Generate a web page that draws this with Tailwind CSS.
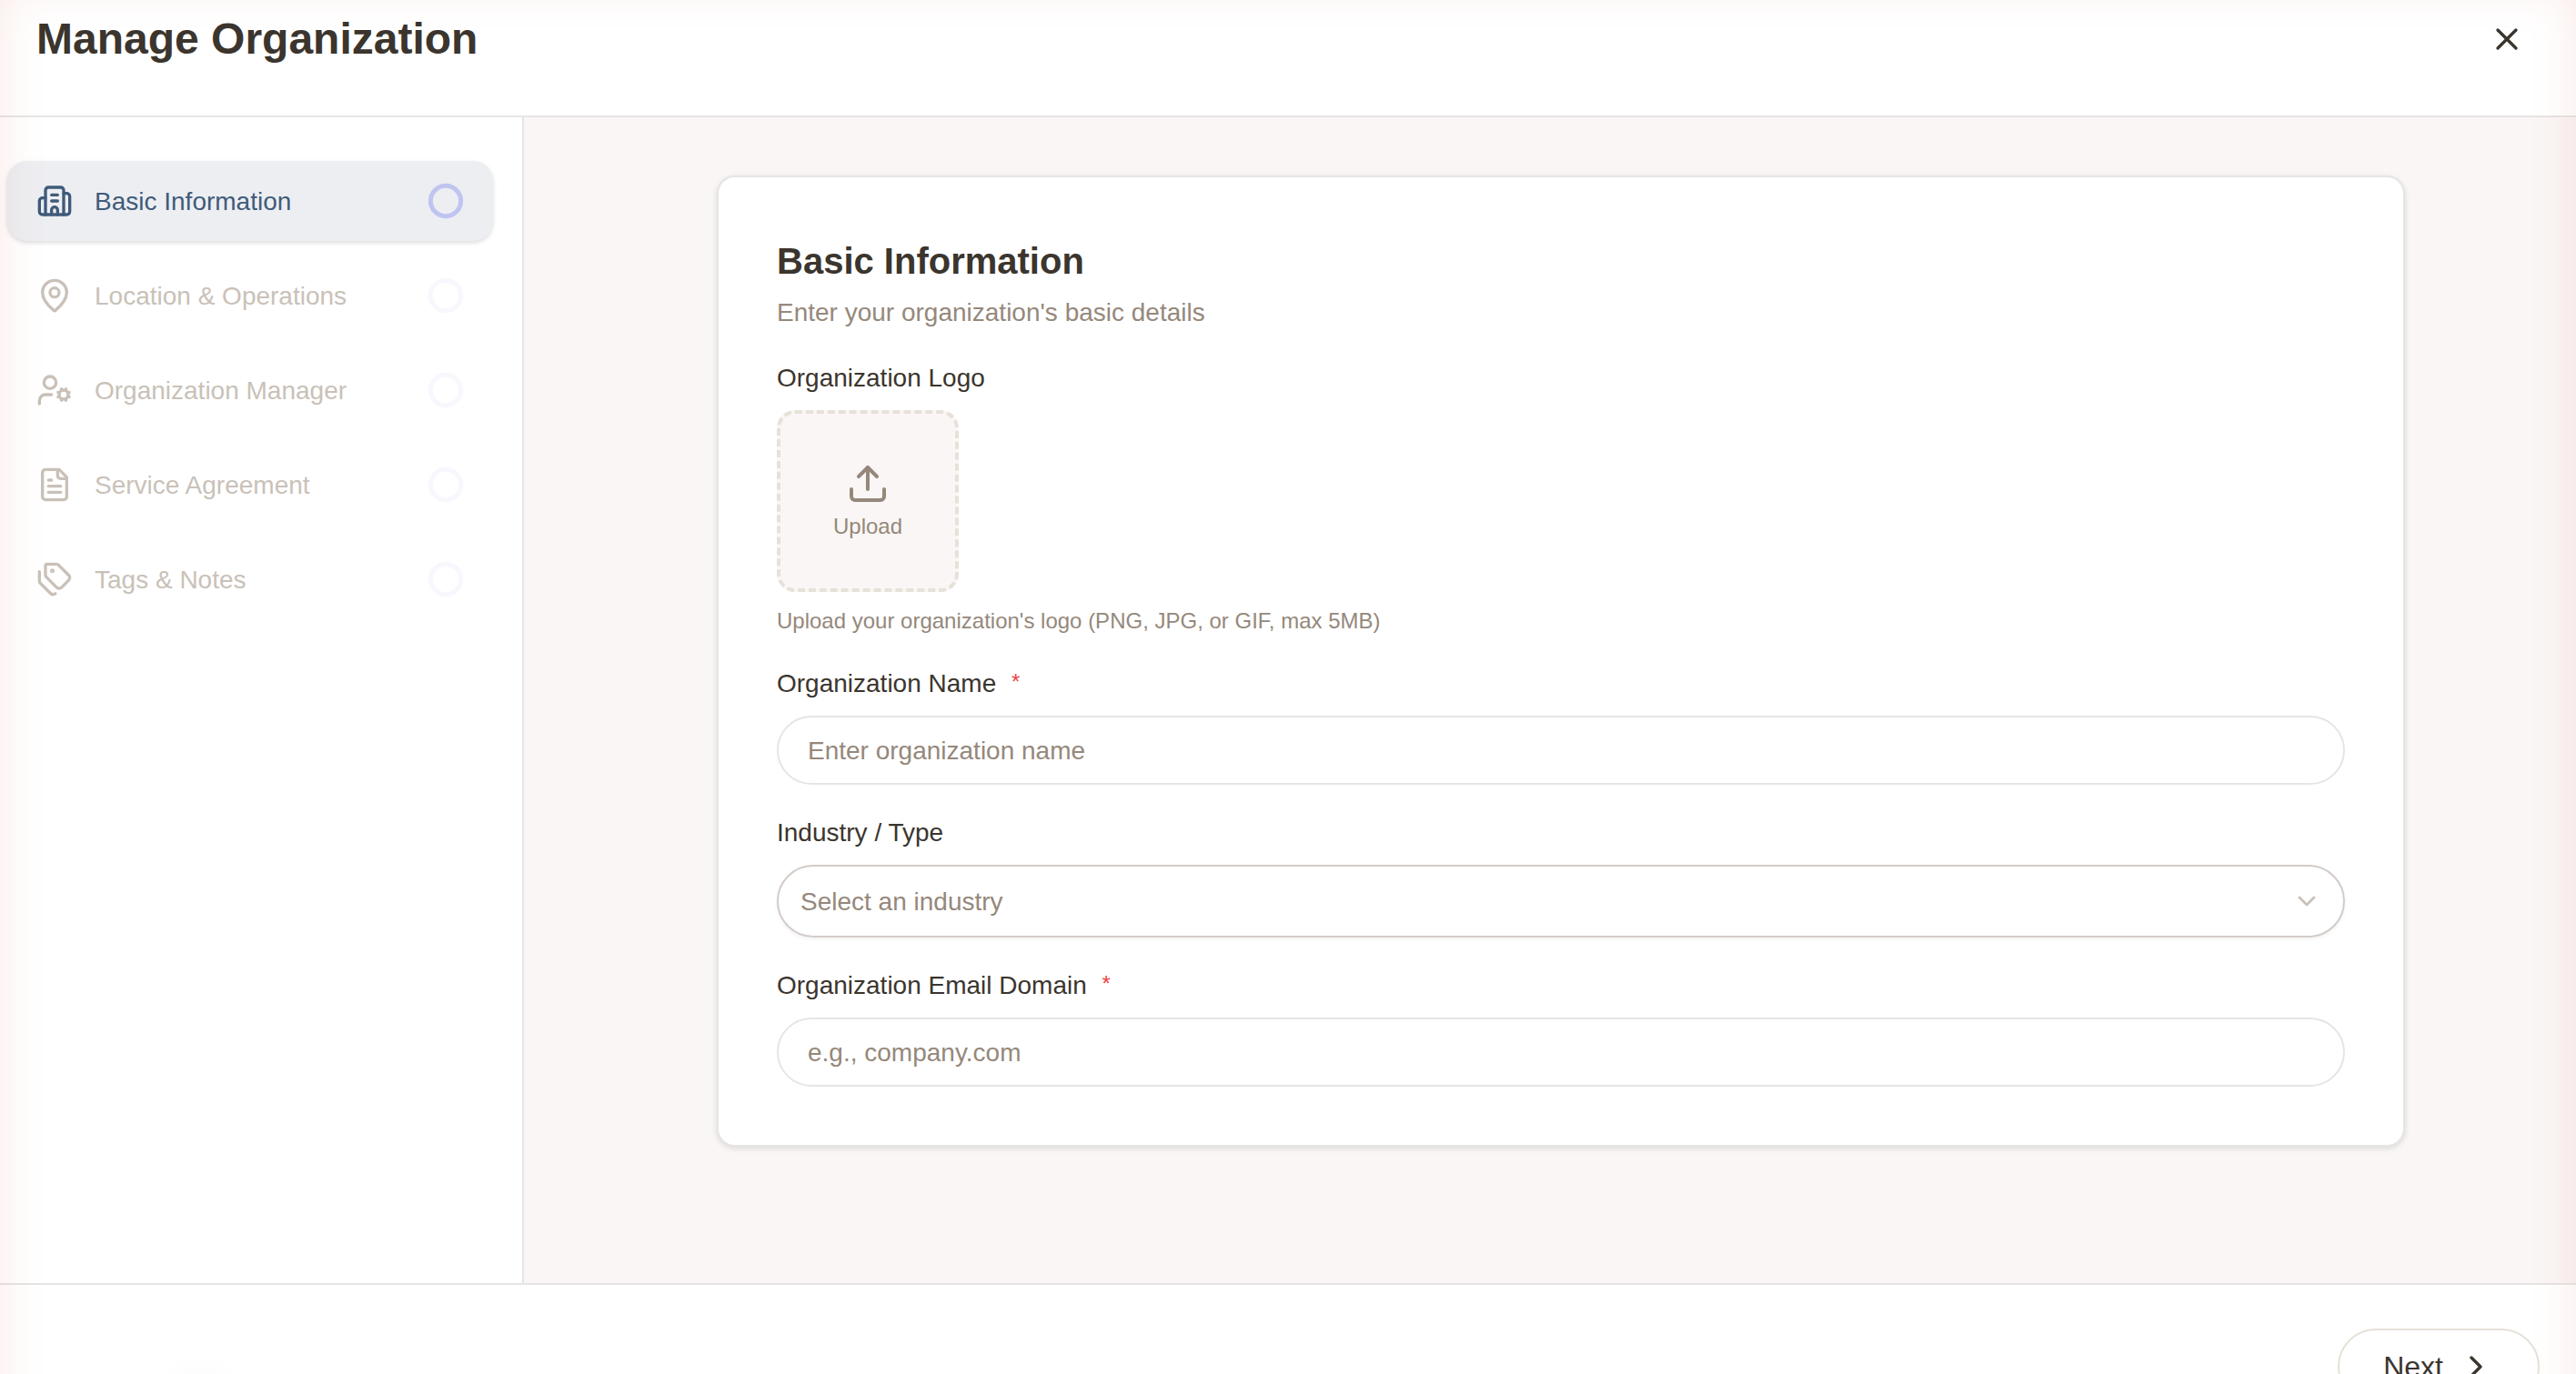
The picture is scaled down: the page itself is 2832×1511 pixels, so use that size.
<!DOCTYPE html>
<html lang="en">
<head>
    <meta charset="UTF-8">
    <meta name="viewport" content="width=device-width, initial-scale=1.0">
    <title>Manage Organization</title>
    <script src="https://cdn.jsdelivr.net/npm/@tailwindcss/browser@4"></script>
</head>
<body class="relative h-screen overflow-hidden bg-white text-[#3b352e] font-['Liberation_Sans',Arial,sans-serif]">
    <div class="flex flex-col h-full">
        <header class="flex justify-between items-start h-[129px] shrink-0 pl-10 pr-14 pt-[15px] border-b-2 border-[#e5e5e5]">
            <h1 class="text-[48px] leading-[56px] font-bold">Manage Organization</h1>
            <button class="mt-2" aria-label="Close">
                <svg class="size-10" viewBox="0 0 24 24" fill="none" stroke="currentColor" stroke-width="2" stroke-linecap="round" stroke-linejoin="round"><path d="M18 6 6 18"/><path d="m6 6 12 12"/></svg>
            </button>
        </header>

        <div class="flex h-[1282px] shrink-0">
            <!-- Steps -->
            <nav class="flex flex-col gap-4 w-[576px] shrink-0 pl-2 pr-8 pt-12 border-r-2 border-[#e5e5e5] text-[28px] leading-10 text-[#c9c1b8]">
                <a class="flex items-center gap-6 h-[88px] px-8 rounded-[22px] bg-[#edeef2] text-[#405b7a] shadow-[0_2px_5px_rgba(0,0,0,0.14)]">
                    <svg class="size-10" viewBox="0 0 24 24" fill="none" stroke="currentColor" stroke-width="2" stroke-linecap="round" stroke-linejoin="round"><path d="M10 12h4"/><path d="M10 8h4"/><path d="M14 21v-3a2 2 0 0 0-4 0v3"/><path d="M6 10H4a2 2 0 0 0-2 2v7a2 2 0 0 0 2 2h16a2 2 0 0 0 2-2V9a2 2 0 0 0-2-2h-2"/><path d="M6 21V5a2 2 0 0 1 2-2h8a2 2 0 0 1 2 2v16"/></svg>
                    <span class="flex-1 pt-0.5">Basic Information</span>
                    <svg class="size-10 text-[#c0c4f0]" viewBox="0 0 24 24" fill="none" stroke="currentColor" stroke-width="3"><circle cx="12" cy="12" r="10"/></svg>
                </a>
                <a class="flex items-center gap-6 h-[88px] px-8">
                    <svg class="size-10" viewBox="0 0 24 24" fill="none" stroke="currentColor" stroke-width="2" stroke-linecap="round" stroke-linejoin="round"><path d="M20 10c0 4.993-5.539 10.193-7.399 11.799a1 1 0 0 1-1.202 0C9.539 20.193 4 14.993 4 10a8 8 0 0 1 16 0"/><circle cx="12" cy="10" r="3"/></svg>
                    <span class="flex-1 pt-0.5">Location &amp; Operations</span>
                    <svg class="size-10 text-[#f7f7fe]" viewBox="0 0 24 24" fill="none" stroke="currentColor" stroke-width="3"><circle cx="12" cy="12" r="10"/></svg>
                </a>
                <a class="flex items-center gap-6 h-[88px] px-8">
                    <svg class="size-10" viewBox="0 0 24 24" fill="none" stroke="currentColor" stroke-width="2" stroke-linecap="round" stroke-linejoin="round"><path d="M10 15H6a4 4 0 0 0-4 4v2"/><path d="m14.305 16.53.923-.382"/><path d="m15.228 13.852-.923-.383"/><path d="m16.852 12.228-.383-.923"/><path d="m16.852 17.772-.383.924"/><path d="m19.148 12.228.383-.923"/><path d="m19.53 18.696-.382-.924"/><path d="m20.772 13.852.924-.383"/><path d="m20.772 16.148.924.383"/><circle cx="18" cy="15" r="3"/><circle cx="9" cy="7" r="4"/></svg>
                    <span class="flex-1 pt-0.5">Organization Manager</span>
                    <svg class="size-10 text-[#f7f7fe]" viewBox="0 0 24 24" fill="none" stroke="currentColor" stroke-width="3"><circle cx="12" cy="12" r="10"/></svg>
                </a>
                <a class="flex items-center gap-6 h-[88px] px-8">
                    <svg class="size-10" viewBox="0 0 24 24" fill="none" stroke="currentColor" stroke-width="2" stroke-linecap="round" stroke-linejoin="round"><path d="M15 2H6a2 2 0 0 0-2 2v16a2 2 0 0 0 2 2h12a2 2 0 0 0 2-2V7z"/><path d="M14 2v4a2 2 0 0 0 2 2h4"/><path d="M10 9H8"/><path d="M16 13H8"/><path d="M16 17H8"/></svg>
                    <span class="flex-1 pt-0.5">Service Agreement</span>
                    <svg class="size-10 text-[#f7f7fe]" viewBox="0 0 24 24" fill="none" stroke="currentColor" stroke-width="3"><circle cx="12" cy="12" r="10"/></svg>
                </a>
                <a class="flex items-center gap-6 h-[88px] px-8">
                    <svg class="size-10" viewBox="0 0 24 24" fill="none" stroke="currentColor" stroke-width="2" stroke-linecap="round" stroke-linejoin="round"><path d="M13.172 2a2 2 0 0 1 1.414.586l6.710 6.710a2.400 2.400 0 0 1 0 3.408l-4.592 4.592a2.400 2.400 0 0 1-3.408 0l-6.710-6.710A2 2 0 0 1 6 9.172V3a1 1 0 0 1 1-1z"/><path d="M2 7v6.172a2 2 0 0 0 .586 1.414l6.710 6.710a2.400 2.400 0 0 0 3.191.193"/><circle cx="10.500" cy="6.500" r=".5" fill="currentColor"/></svg>
                    <span class="flex-1 pt-0.5">Tags &amp; Notes</span>
                    <svg class="size-10 text-[#f7f7fe]" viewBox="0 0 24 24" fill="none" stroke="currentColor" stroke-width="3"><circle cx="12" cy="12" r="10"/></svg>
                </a>
            </nav>

            <main class="flex-1 bg-[#faf6f5] pl-[212px] pr-[188px] pt-16">
                <section class="h-[1068px] p-16 rounded-[20px] bg-white border-2 border-[#e5e5e5] shadow-[0_2px_6px_rgba(0,0,0,0.12)] text-[28px] leading-[42px]">
                    <h2 class="text-[40px] leading-[56px] font-bold">Basic Information</h2>
                    <p class="mt-2 text-[#95887b]">Enter your organization's basic details</p>

                    <div class="mt-[30px]">
                        <label class="block">Organization Logo</label>
                        <div class="mt-3.5 size-[200px] flex flex-col items-center justify-center gap-[7px] rounded-[20px] border-4 border-dashed border-[#e6e2d8] bg-[#faf6f5] text-[#95887b]">
                            <svg class="size-12 mt-px" viewBox="0 0 24 24" fill="none" stroke="currentColor" stroke-width="2" stroke-linecap="round" stroke-linejoin="round"><path d="M12 3v12"/><path d="m17 8-5-5-5 5"/><path d="M21 15v4a2 2 0 0 1-2 2H5a2 2 0 0 1-2-2v-4"/></svg>
                            <span class="text-2xl leading-8">Upload</span>
                        </div>
                        <p class="mt-4 text-2xl leading-8 text-[#95887b]">Upload your organization's logo (PNG, JPG, or GIF, max 5MB)</p>
                    </div>

                    <div class="mt-8">
                        <label for="org-name" class="block h-[42px]">Organization Name <span class="ml-[9px] text-2xl leading-none align-[3px] text-[#ef4444]">*</span></label>
                        <input id="org-name" type="text" placeholder="Enter organization name" class="block mt-3.5 w-full h-[76px] px-8 pt-0.5 rounded-full border-2 border-[#e5e5e5] placeholder:text-[#95887b]">
                    </div>

                    <div class="mt-8">
                        <label class="block">Industry / Type</label>
                        <button class="mt-3.5 flex items-center justify-between w-full h-20 px-6 rounded-full border-2 border-[#d3ccc8] shadow-[0_2px_4px_rgba(0,0,0,0.05)] text-[#95887b]">
                            <span class="pt-0.5">Select an industry</span>
                            <svg class="size-8 text-[#c9c1b8]" viewBox="0 0 24 24" fill="none" stroke="currentColor" stroke-width="2" stroke-linecap="round" stroke-linejoin="round"><path d="m6 9 6 6 6-6"/></svg>
                        </button>
                    </div>

                    <div class="mt-8">
                        <label for="org-domain" class="block h-[42px]">Organization Email Domain <span class="ml-[9px] text-2xl leading-none align-[3px] text-[#ef4444]">*</span></label>
                        <input id="org-domain" type="text" placeholder="e.g., company.com" class="block mt-3.5 w-full h-[76px] px-8 pt-0.5 rounded-full border-2 border-[#e5e5e5] placeholder:text-[#95887b]">
                    </div>
                </section>
            </main>
        </div>

        <footer class="flex justify-end items-start h-[100px] shrink-0 pr-10 pt-12 border-t-2 border-[#e5e5e5] bg-radial-[circle_60px_at_220px_135px] from-[#f9f9f9] to-white">
            <button class="flex items-center gap-4 h-[84px] shrink-0 px-12 rounded-full border-2 border-[#e6e2d8] text-[32px] leading-10">
                <span>Next</span>
                <svg class="size-10" viewBox="0 0 24 24" fill="none" stroke="currentColor" stroke-width="2" stroke-linecap="round" stroke-linejoin="round"><path d="m9 18 6-6-6-6"/></svg>
            </button>
        </footer>
    </div>

    <!-- Warm glow along the window edges -->
    <div class="absolute inset-x-0 -top-4 h-[1640px] pointer-events-none shadow-[inset_0_0_50px_rgba(205,110,80,0.15)]"></div>
</body>
</html>
